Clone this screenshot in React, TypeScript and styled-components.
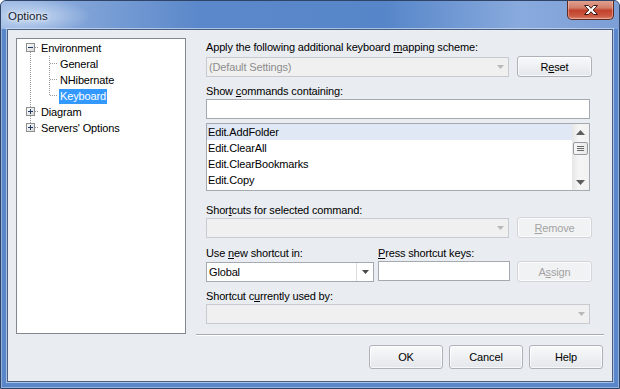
import { FC, ReactNode } from 'react';
import styled, { createGlobalStyle } from 'styled-components';

const GlobalStyle = createGlobalStyle`
  html, body {
    margin: 0;
    padding: 0;
    background: #ffffff;
  }
  body {
    font-family: "Liberation Sans", Arial, sans-serif;
    font-size: 11px;
    letter-spacing: -0.15px;
    color: #000000;
  }
`;

type Line = 'none' | 'full' | 'top' | 'bottom';

interface ConnectorProps {
  v: Line;
  box?: 'plus' | 'minus';
  h?: boolean;
}

const DOT = '#9a9a9a';

const Connector: FC<ConnectorProps> = ({ v, box, h }) => {
  const segs: [number, number][] = [];
  if (v === 'full') segs.push(box ? [0, 3] : [0, 16]);
  if (v === 'full' && box) segs.push([12, 16]);
  if (v === 'top') segs.push(box ? [0, 3] : [0, 8]);
  if (v === 'bottom') segs.push(box ? [12, 16] : [8, 16]);
  return (
    <svg width="19" height="16" viewBox="0 0 19 16" shapeRendering="crispEdges">
      <defs>
        <linearGradient id="tb" x1="0" y1="0" x2="1" y2="1">
          <stop offset="0" stopColor="#ffffff" />
          <stop offset="1" stopColor="#d6d6d6" />
        </linearGradient>
      </defs>
      {segs.map(([a, b], i) => (
        <line key={i} x1="9.5" y1={a} x2="9.5" y2={b} stroke={DOT} strokeDasharray="1 1" />
      ))}
      {h && (
        <line x1={box ? 14 : 10} y1="7.5" x2="18" y2="7.5" stroke={DOT} strokeDasharray="1 1" />
      )}
      {box && (
        <>
          <rect x="5.5" y="3.5" width="8" height="8" fill="url(#tb)" stroke="#8e8f8f" />
          <rect x="7" y="7" width="5" height="1" fill="#1f3a63" />
          {box === 'plus' && <rect x="9" y="5" width="1" height="5" fill="#1f3a63" />}
        </>
      )}
    </svg>
  );
};

const DropArrow: FC<{ color: string }> = ({ color }) => (
  <svg width="7" height="4" viewBox="0 0 7 4">
    <path d="M0 0H7L3.5 4Z" fill={color} />
  </svg>
);

const UpArrow: FC = () => (
  <svg width="9" height="5" viewBox="0 0 9 5">
    <path d="M0 5H9L4.5 0Z" fill="#5e5e5e" />
  </svg>
);

const DownArrow: FC = () => (
  <svg width="9" height="5" viewBox="0 0 9 5">
    <path d="M0 0H9L4.5 5Z" fill="#5e5e5e" />
  </svg>
);

const CloseGlyph: FC = () => (
  <svg width="16" height="12" viewBox="0 0 16 12">
    <path
      d="M1.5 1.5H5.5L8 4.3L10.5 1.5H14.5L10.2 6L14.5 10.5H10.5L8 7.7L5.5 10.5H1.5L5.8 6Z"
      fill="#ffffff"
      stroke="#3c1a16"
      strokeWidth="1"
      strokeLinejoin="round"
    />
  </svg>
);

const App: FC = () => {
  return (
    <>
      <GlobalStyle />
      <Window>
        <TitleBar>
          <TitleText>Options</TitleText>
          <CloseButton>
            <CloseGlyph />
          </CloseButton>
        </TitleBar>
        <Frame>
          <Client>
            <Tree>
              <TreeRow>
                <Connector v="bottom" box="minus" h />
                <TreeLabel>Environment</TreeLabel>
              </TreeRow>
              <TreeRow>
                <Connector v="full" />
                <Connector v="full" h />
                <TreeLabel>General</TreeLabel>
              </TreeRow>
              <TreeRow>
                <Connector v="full" />
                <Connector v="full" h />
                <TreeLabel>NHibernate</TreeLabel>
              </TreeRow>
              <TreeRow>
                <Connector v="full" />
                <Connector v="top" h />
                <TreeLabel $selected>Keyboard</TreeLabel>
              </TreeRow>
              <TreeRow>
                <Connector v="full" box="plus" h />
                <TreeLabel>Diagram</TreeLabel>
              </TreeRow>
              <TreeRow>
                <Connector v="top" box="plus" h />
                <TreeLabel>Servers' Options</TreeLabel>
              </TreeRow>
            </Tree>
            <RightColumn>
              <Form>
                <Label $top={2}>
                  Apply the following additional keyboard <u>m</u>apping scheme:
                </Label>
                <ControlRow $top={2}>
                  <Combo $width={303} $disabled>
                    <ComboValue $disabled>(Default Settings)</ComboValue>
                    <ComboDrop>
                      <DropArrow color="#b9b9b9" />
                    </ComboDrop>
                  </Combo>
                  <Button $width={75}>
                    R<u>e</u>set
                  </Button>
                </ControlRow>
                <Label $top={7}>
                  Show <u>c</u>ommands containing:
                </Label>
                <TextBox $width={384} $top={1} />
                <List>
                  <ListItems>
                    {['Edit.AddFolder', 'Edit.ClearAll', 'Edit.ClearBookmarks', 'Edit.Copy'].map(
                      (name, i) => (
                        <ListItem key={name} $selected={i === 0}>
                          {name}
                        </ListItem>
                      ),
                    )}
                  </ListItems>
                  <ScrollBar>
                    <ScrollButton>
                      <UpArrow />
                    </ScrollButton>
                    <Thumb>
                      <Grip />
                      <Grip />
                      <Grip />
                    </Thumb>
                    <ScrollButton>
                      <DownArrow />
                    </ScrollButton>
                  </ScrollBar>
                </List>
                <Label $top={12}>
                  Shor<u>t</u>cuts for selected command:
                </Label>
                <ControlRow $top={0}>
                  <Combo $width={303} $disabled>
                    <ComboValue $disabled />
                    <ComboDrop>
                      <DropArrow color="#b9b9b9" />
                    </ComboDrop>
                  </Combo>
                  <Button $width={75} $disabled>
                    <u>R</u>emove
                  </Button>
                </ControlRow>
                <LabelRow>
                  <Label $top={0} $width={172}>
                    Use <u>n</u>ew shortcut in:
                  </Label>
                  <Label $top={0}>
                    <u>P</u>ress shortcut keys:
                  </Label>
                </LabelRow>
                <ControlRow $top={1}>
                  <Combo $width={168}>
                    <ComboValue>Global</ComboValue>
                    <ComboDrop $divided>
                      <DropArrow color="#4a4a4a" />
                    </ComboDrop>
                  </Combo>
                  <TextBox $width={132} $top={0} $left={4} />
                  <Button $width={75} $disabled $left={7}>
                    A<u>s</u>sign
                  </Button>
                </ControlRow>
                <Label $top={7}>
                  Shortcut c<u>u</u>rrently used by:
                </Label>
                <Combo $width={384} $disabled $top={1}>
                  <ComboValue $disabled />
                  <ComboDrop>
                    <DropArrow color="#b9b9b9" />
                  </ComboDrop>
                </Combo>
              </Form>
              <Separator />
              <ButtonRow>
                <DialogButton>OK</DialogButton>
                <DialogButton>Cancel</DialogButton>
                <DialogButton>Help</DialogButton>
              </ButtonRow>
            </RightColumn>
          </Client>
        </Frame>
      </Window>
    </>
  );
};
export default App;

const Window = styled.div`
  width: 620px;
  height: 389px;
  box-sizing: border-box;
  display: flex;
  flex-direction: column;
  border: 1px solid #2f4466;
  border-radius: 6px 6px 0 0;
  background: #5a87c9;
  box-shadow: inset 0 0 0 1px rgba(255, 255, 255, 0.35);
  overflow: hidden;
`;

const TitleBar = styled.div`
  height: 28px;
  display: flex;
  justify-content: space-between;
  align-items: flex-start;
  padding: 0 5px 0 7px;
  background: radial-gradient(ellipse 60px 18px at 30px 15px, rgba(205, 222, 245, 0.85), rgba(205, 222, 245, 0) 100%),
    linear-gradient(90deg, #9cb8e2 0%, #7ea2d7 14%, #5b88ca 32%, #5686c9 62%, #89aadd 84%, #7c9fd6 100%);
`;

const TitleText = styled.div`
  padding-top: 8px;
  font-size: 11.5px;
  line-height: 14px;
  color: #16202e;
  letter-spacing: 0;
  text-shadow: 0 0 6px rgba(255, 255, 255, 0.95), 0 0 3px rgba(255, 255, 255, 0.8);
`;

const CloseButton = styled.div`
  width: 47px;
  height: 20px;
  margin-top: -1px;
  box-sizing: border-box;
  display: flex;
  align-items: center;
  justify-content: center;
  border: 1px solid #5b2a22;
  border-top: none;
  border-radius: 0 0 5px 5px;
  background: linear-gradient(180deg, #e4a493 0%, #d2806c 40%, #c3412c 55%, #cb5a43 85%, #e08a72 100%);
  box-shadow: inset 0 0 0 1px rgba(255, 210, 200, 0.45);
`;

const Frame = styled.div`
  flex: 1;
  display: flex;
  padding: 0 6px 6px 6px;
`;

const Client = styled.div`
  flex: 1;
  display: flex;
  align-items: flex-start;
  padding: 8px 0 0 8px;
  border: 1px solid #4b5f80;
  background: #e9ecf1;
  box-shadow: 0 0 0 1px rgba(220, 232, 248, 0.6);
`;

const Tree = styled.div`
  width: 170px;
  height: 296px;
  box-sizing: border-box;
  padding: 1px 0 0 4px;
  border: 1px solid #828790;
  background: #ffffff;
  display: flex;
  flex-direction: column;
`;

const TreeRow = styled.div`
  display: flex;
  align-items: center;
  height: 16px;
`;

const TreeLabel = styled.span<{ $selected?: boolean }>`
  padding: 0 1px;
  line-height: 15px;
  height: 15px;
  white-space: nowrap;
  color: ${(p) => (p.$selected ? '#ffffff' : '#000000')};
  background: ${(p) => (p.$selected ? '#3399ff' : 'transparent')};
`;

const RightColumn = styled.div`
  width: 408px;
  margin-left: 10px;
  display: flex;
  flex-direction: column;
`;

const Form = styled.div`
  width: 386px;
  padding-left: 10px;
  display: flex;
  flex-direction: column;
  align-items: flex-start;
`;

const Label = styled.div<{ $top: number; $width?: number }>`
  margin-top: ${(p) => p.$top}px;
  width: ${(p) => (p.$width ? `${p.$width}px` : 'auto')};
  line-height: 14px;
  height: 14px;
  white-space: nowrap;
  color: #000000;
`;

const LabelRow = styled.div`
  display: flex;
  margin-top: 8px;
`;

const ControlRow = styled.div<{ $top: number }>`
  display: flex;
  align-items: flex-start;
  margin-top: ${(p) => p.$top}px;
  gap: 0;
`;

const Combo = styled.div<{ $width: number; $disabled?: boolean; $top?: number }>`
  width: ${(p) => p.$width}px;
  height: 20px;
  margin-top: ${(p) => p.$top ?? 1}px;
  margin-right: ${(p) => (p.$width === 303 ? 8 : 0)}px;
  box-sizing: border-box;
  display: flex;
  border: 1px solid ${(p) => (p.$disabled ? '#c7cacf' : '#a5a9b0')};
  background: ${(p) => (p.$disabled ? '#f0f0f0' : '#ffffff')};
`;

const ComboValue = styled.div<{ $disabled?: boolean }>`
  flex: 1;
  padding-left: 2px;
  line-height: 18px;
  white-space: nowrap;
  color: ${(p) => (p.$disabled ? '#8d8d8d' : '#000000')};
`;

const ComboDrop = styled.div<{ $divided?: boolean }>`
  width: 16px;
  display: flex;
  align-items: center;
  justify-content: center;
  border-left: 1px solid ${(p) => (p.$divided ? '#dadce0' : 'transparent')};
`;

const TextBox = styled.div<{ $width: number; $top: number; $left?: number }>`
  width: ${(p) => p.$width}px;
  height: 20px;
  margin-top: ${(p) => p.$top}px;
  margin-left: ${(p) => p.$left ?? 0}px;
  box-sizing: border-box;
  border: 1px solid #a5a9b0;
  background: #ffffff;
`;

const Button = styled.div<{ $width: number; $disabled?: boolean; $left?: number }>`
  width: ${(p) => p.$width}px;
  height: 21px;
  margin-left: ${(p) => p.$left ?? 0}px;
  box-sizing: border-box;
  display: flex;
  align-items: center;
  justify-content: center;
  border: 1px solid ${(p) => (p.$disabled ? '#d1d4d8' : '#adb1b8')};
  border-radius: 3px;
  color: ${(p) => (p.$disabled ? '#a3a3a3' : '#000000')};
  background: ${(p) =>
    p.$disabled ? '#f1f2f4' : 'linear-gradient(180deg, #f8f9fa 0%, #eef0f3 50%, #e4e7eb 100%)'};
  box-shadow: inset 0 0 0 1px rgba(255, 255, 255, 0.7);
`;

const List = styled.div`
  width: 384px;
  height: 68px;
  margin-top: 4px;
  box-sizing: border-box;
  display: flex;
  border: 1px solid #a5a9b0;
  background: #ffffff;
`;

const ListItems = styled.div`
  flex: 1;
  display: flex;
  flex-direction: column;
`;

const ListItem = styled.div<{ $selected?: boolean }>`
  height: 16px;
  line-height: 16px;
  padding-left: 1px;
  background: ${(p) => (p.$selected ? '#dfe8f4' : 'transparent')};
`;

const ScrollBar = styled.div`
  width: 17px;
  display: flex;
  flex-direction: column;
  align-items: center;
  background: linear-gradient(90deg, #e6e6e6 0%, #f5f5f5 40%, #f2f2f2 100%);
`;

const ScrollButton = styled.div`
  width: 17px;
  height: 16px;
  display: flex;
  align-items: center;
  justify-content: center;
  &:last-child {
    margin-top: auto;
  }
`;

const Thumb = styled.div`
  width: 15px;
  height: 13px;
  margin-top: 2px;
  box-sizing: border-box;
  display: flex;
  flex-direction: column;
  align-items: center;
  justify-content: center;
  gap: 1px;
  border: 1px solid #979aa0;
  border-radius: 2px;
  background: linear-gradient(90deg, #f6f6f6 0%, #e9e9e9 100%);
`;

const Grip = styled.div`
  width: 7px;
  height: 1px;
  background: #6a6a6a;
`;

const Separator = styled.div`
  height: 1px;
  margin-top: 10px;
  background: #a9adb3;
  box-shadow: 0 1px 0 #ffffff;
`;

const ButtonRow = styled.div`
  display: flex;
  justify-content: flex-end;
  gap: 6px;
  margin-top: 10px;
  padding-right: 1px;
`;

const DialogButton = styled.div<{ children?: ReactNode }>`
  width: 74px;
  height: 24px;
  box-sizing: border-box;
  display: flex;
  align-items: center;
  justify-content: center;
  border: 1px solid #adb1b8;
  border-radius: 3px;
  background: linear-gradient(180deg, #f8f9fa 0%, #eef0f3 50%, #e4e7eb 100%);
  box-shadow: inset 0 0 0 1px rgba(255, 255, 255, 0.7);
`;
